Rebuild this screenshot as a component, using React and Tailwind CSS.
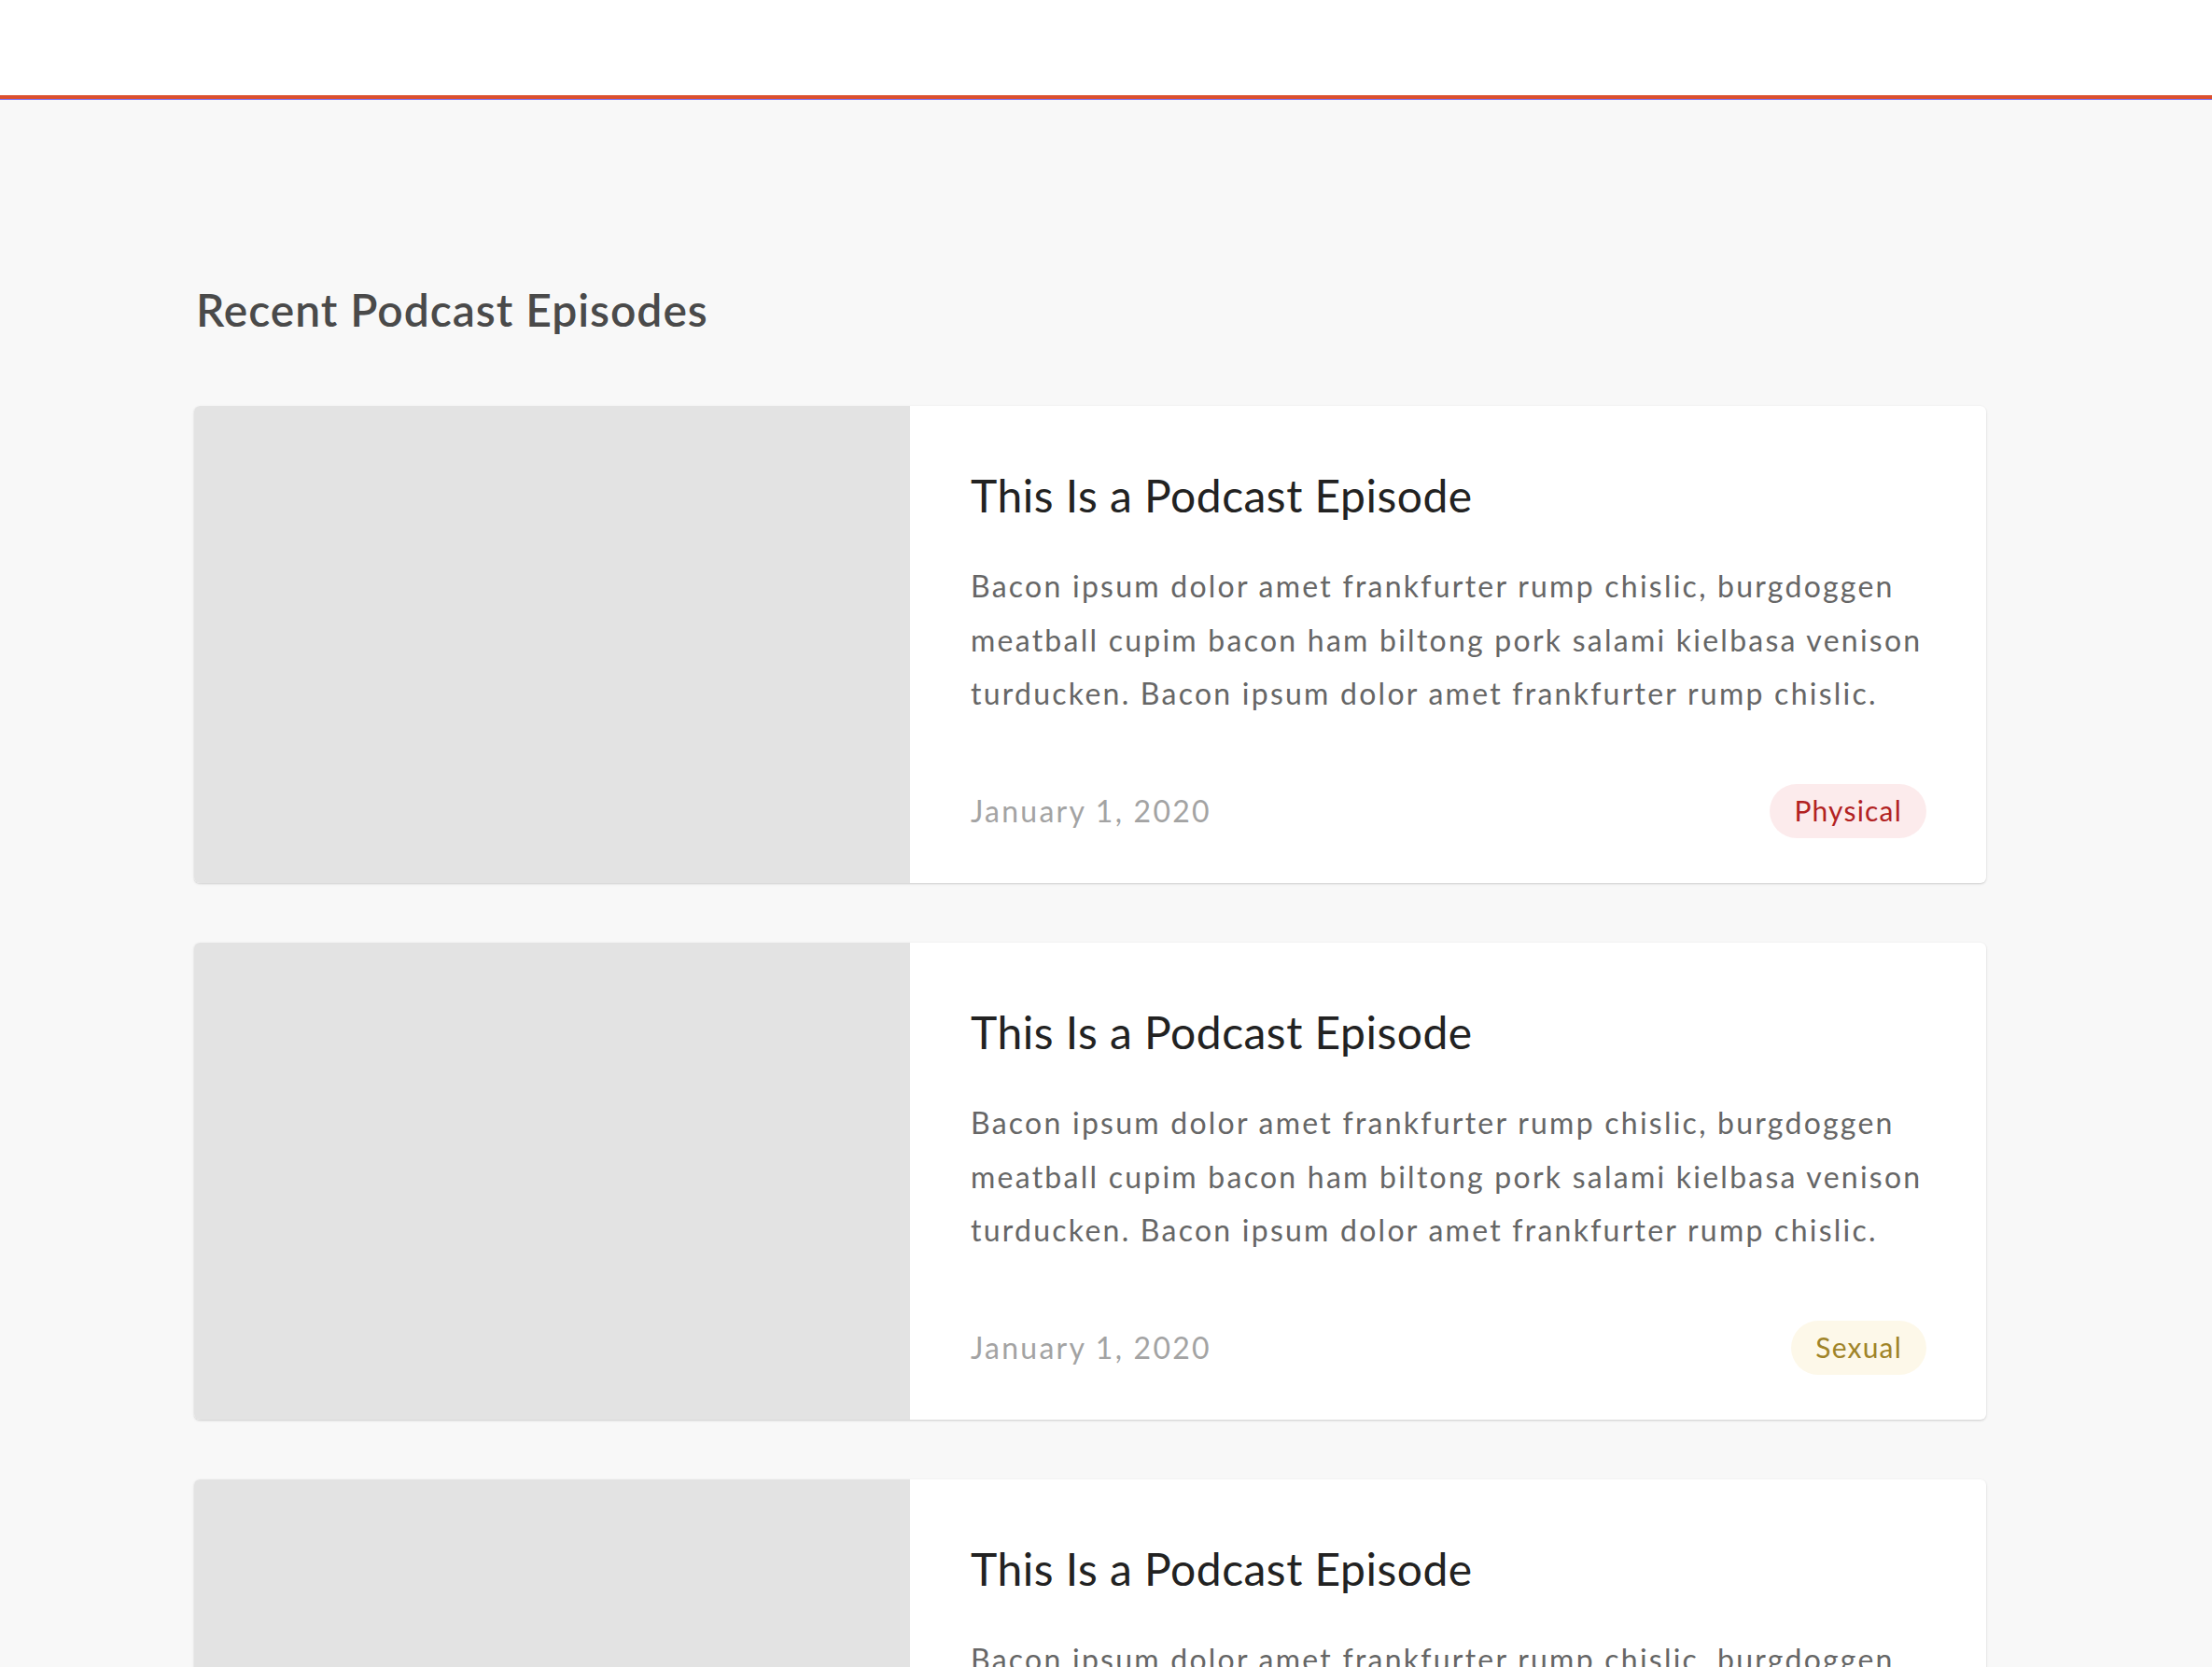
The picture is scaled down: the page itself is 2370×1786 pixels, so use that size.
const episodes = [
  { id: 1, tag: "Physical", tone: "red" },
  { id: 2, tag: "Sexual", tone: "gold" },
  { id: 3, tag: "Mental", tone: "red" },
];

const tagStyle = {
  red: "bg-[#fcebec] text-[#b22222]",
  gold: "bg-[#fdf8e9] text-[#a08428]",
};

const body =
  "Bacon ipsum dolor amet frankfurter rump chislic, burgdoggen meatball cupim bacon ham biltong pork salami kielbasa venison turducken. Bacon ipsum dolor amet frankfurter rump chislic.";

function EpisodeCard({ ep }) {
  return (
    <article className="flex h-[511px] overflow-hidden rounded-md bg-white shadow-[0_1px_3px_rgba(0,0,0,0.12),0_1px_2px_rgba(0,0,0,0.06)]">
      <div className="w-[767px] shrink-0 bg-[#e3e3e3]" />
      <div className="flex flex-1 flex-col pt-[67px] pr-16 pb-12 pl-[65px]">
        <h3 className="text-[48px] leading-[1.2] font-normal tracking-[0.01em] text-[#222]">This Is a Podcast Episode</h3>
        <p className="mt-10 text-[32px] leading-[1.8] tracking-[0.07em] text-[#666]">{body}</p>
        <div className="mt-auto flex items-center justify-between">
          <span className="text-[32px] tracking-[0.07em] text-[#a3a3a3]">January 1, 2020</span>
          <span className={`flex h-[58px] items-center rounded-full px-[26px] text-[30px] tracking-[0.04em] ${tagStyle[ep.tone]}`}>
            {ep.tag}
          </span>
        </div>
      </div>
    </article>
  );
}

export default function App() {
  return (
    <div className="min-h-screen bg-[#f8f8f8] font-['Lato',sans-serif]">
      {/* header bar */}
      <header className="h-[102px] bg-white" />
      <div className="h-1 bg-[#dc502f]" />
      <div className="h-px bg-[#7a6cf0]" />

      <main className="ml-[208px] w-[1920px] pt-[196px] pb-24">
        <h2 className="ml-[2px] text-[48px] leading-[1.2] font-semibold tracking-[0.02em] text-[#4a4a4a]">Recent Podcast Episodes</h2>
        <div className="mt-[74px] space-y-16">
          {episodes.map((ep) => (
            <EpisodeCard key={ep.id} ep={ep} />
          ))}
        </div>
      </main>
    </div>
  );
}
